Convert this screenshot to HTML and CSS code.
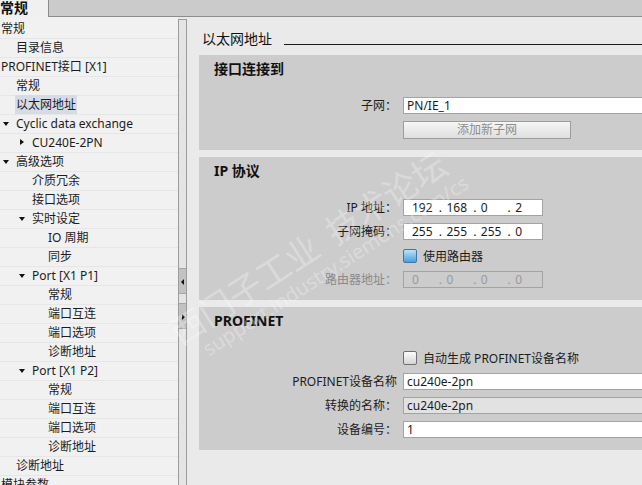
FILE: index.html
```html
<!DOCTYPE html>
<html lang="zh">
<head>
<meta charset="UTF-8">
<meta name="viewport" content="width=device-width, initial-scale=1.0">
<title>以太网地址</title>
<link rel="stylesheet" href="styles.css">
</head>
<body>
  <div class="tabbar">
    <div class="tab">常规</div>
  </div>
  <div class="main">
    <div class="tree">
      <div class="row l0">常规</div>
      <div class="row l1">目录信息</div>
      <div class="row l0">PROFINET接口 [X1]</div>
      <div class="row l1">常规</div>
      <div class="row l1"><span class="selected">以太网地址</span></div>
      <div class="row l1"><span class="arrow down"></span>Cyclic data exchange</div>
      <div class="row l2"><span class="arrow right"></span>CU240E-2PN</div>
      <div class="row l1"><span class="arrow down"></span>高级选项</div>
      <div class="row l2">介质冗余</div>
      <div class="row l2">接口选项</div>
      <div class="row l2"><span class="arrow down"></span>实时设定</div>
      <div class="row l3">IO 周期</div>
      <div class="row l3">同步</div>
      <div class="row l2"><span class="arrow down"></span>Port [X1 P1]</div>
      <div class="row l3">常规</div>
      <div class="row l3">端口互连</div>
      <div class="row l3">端口选项</div>
      <div class="row l3">诊断地址</div>
      <div class="row l2"><span class="arrow down"></span>Port [X1 P2]</div>
      <div class="row l3">常规</div>
      <div class="row l3">端口互连</div>
      <div class="row l3">端口选项</div>
      <div class="row l3">诊断地址</div>
      <div class="row l1">诊断地址</div>
      <div class="row l0">模块参数</div>
    </div>

    <div class="splitter">
      <div class="knob left"></div>
      <div class="knob right"></div>
    </div>

    <div class="content">
      <div class="page-title">
        <span>以太网地址</span>
        <span class="rule"></span>
      </div>

      <div class="section">
        <div class="section-title">接口连接到</div>
        <div class="form">
          <span class="label">子网：</span>
          <div class="input long">PN/IE_1</div>
          <span class="label"></span>
          <div class="button">添加新子网</div>
        </div>
      </div>

      <div class="section">
        <div class="section-title">IP 协议</div>
        <div class="form">
          <span class="label">IP 地址：</span>
          <div class="input ip"><span class="oct">192</span><span class="dot">.</span><span class="oct">168</span><span class="dot">.</span><span class="oct">0</span><span class="dot">.</span><span class="oct">2</span></div>
          <span class="label">子网掩码：</span>
          <div class="input ip"><span class="oct">255</span><span class="dot">.</span><span class="oct">255</span><span class="dot">.</span><span class="oct">255</span><span class="dot">.</span><span class="oct">0</span></div>
          <span class="label"></span>
          <div class="checkrow"><span class="check on"></span>使用路由器</div>
          <span class="label disabled">路由器地址：</span>
          <div class="input ip off"><span class="oct">0</span><span class="dot">.</span><span class="oct">0</span><span class="dot">.</span><span class="oct">0</span><span class="dot">.</span><span class="oct">0</span></div>
        </div>
      </div>

      <div class="section">
        <div class="section-title">PROFINET</div>
        <div class="form">
          <span class="label"></span>
          <div class="checkrow"><span class="check"></span>自动生成 PROFINET设备名称</div>
          <span class="label">PROFINET设备名称</span>
          <div class="input long">cu240e-2pn</div>
          <span class="label">转换的名称：</span>
          <div class="input long readonly">cu240e-2pn</div>
          <span class="label">设备编号：</span>
          <div class="input long">1</div>
        </div>
      </div>
    </div>
  </div>

  <!-- forum watermark over the screenshot -->
  <div class="watermark">
    <div class="wm-big">西门子工业&nbsp;&nbsp;技术论坛</div>
    <div class="wm-small">support.industry.siemens.com/cs</div>
  </div>
</body>
</html>
```

FILE: styles.css
```css
body {
  margin: 0;
  width: 642px;
  height: 485px;
  overflow: hidden;
  position: relative;
  font-family: "Noto Sans", "Noto Sans CJK SC", sans-serif;
  font-size: 12px;
  color: #1c1c1c;
  background-color: #eaeaea;
}

.tabbar {
  height: 16px;
  background-color: #cbcbcb;
  border-bottom: 1px solid #8c8c8c;
  display: flex;
  align-items: flex-start;
}
.tab {
  width: 48px;
  height: 17px;
  background-color: #f0f0f0;
  border-right: 1px solid #8c8c8c;
  font-weight: bold;
  font-size: 14px;
  line-height: 16px;
  color: #111;
}

.main {
  display: flex;
  height: 468px;
}

/* navigation tree */
.tree {
  width: 178px;
  flex: none;
  padding-top: 3px;
  background-color: #f1f1f1;
  overflow: hidden;
}
.row {
  height: 19px;
  line-height: 18px;
  box-sizing: border-box;
  border-bottom: 1px solid #e6e6e6;
  white-space: nowrap;
}
.row.l0 { padding-left: 1px; }
.row.l1 { padding-left: 16px; }
.row.l2 { padding-left: 32px; }
.row.l3 { padding-left: 48px; }
.selected {
  background-color: #d6dce6;
  padding: 1px 1px;
  margin-left: -1px;
}
.arrow {
  display: inline-block;
  width: 16px;
  height: 18px;
  margin-left: -16px;
  vertical-align: top;
  position: relative;
}
.arrow.down::before {
  content: "";
  position: absolute;
  left: 3px;
  top: 7px;
  border-left: 3.5px solid transparent;
  border-right: 3.5px solid transparent;
  border-top: 4px solid #111;
}
.arrow.right::before {
  content: "";
  position: absolute;
  left: 4px;
  top: 5px;
  border-top: 3.5px solid transparent;
  border-bottom: 3.5px solid transparent;
  border-left: 4px solid #111;
}

/* splitter between tree and editor */
.splitter {
  width: 7px;
  flex: none;
  margin-top: 2px;
  background-color: #e4e4e4;
  border: 1px solid #9c9c9c;
  border-bottom: none;
  display: flex;
  flex-direction: column;
}
.knob {
  height: 24px;
  background-color: #c2c2c2;
  border-top: 1px solid #a5a5a5;
  border-bottom: 1px solid #a5a5a5;
  position: relative;
}
.knob.left { margin-top: 248px; }
.knob.right { margin-top: 9px; }
.knob::before {
  content: "";
  position: absolute;
  top: 10px;
  border-top: 3px solid transparent;
  border-bottom: 3px solid transparent;
}
.knob.left::before { left: 2px; border-right: 3px solid #111; }
.knob.right::before { left: 3px; border-left: 3px solid #111; }

/* editor */
.content {
  flex: 1;
  padding-left: 12px;
  overflow: hidden;
  background-color: #eaeaea;
}
.page-title {
  display: flex;
  height: 20px;
  padding-top: 12px;
  margin-bottom: 6px;
  padding-left: 3px;
  font-size: 14px;
  line-height: 20px;
  color: #111;
  white-space: nowrap;
}
.rule {
  flex: 1;
  height: 0;
  margin-top: 15px;
  margin-left: 12px;
  border-top: 1px solid #1a1a1a;
}

.section {
  background-color: #cccccc;
  margin-bottom: 7px;
  padding-bottom: 12px;
}
.section-title {
  padding: 4px 0 0 15px;
  height: 20px;
  line-height: 20px;
  margin-bottom: 18px;
  font-size: 14px;
  font-weight: bold;
  color: #111;
}

.form {
  display: grid;
  grid-template-columns: 198px auto;
  grid-auto-rows: 17px;
  column-gap: 6px;
  row-gap: 7px;
}
.label {
  text-align: right;
  line-height: 17px;
  white-space: nowrap;
}
.label.disabled { color: #8a8a8a; }

.input {
  height: 17px;
  box-sizing: border-box;
  border: 1px solid #a3a3a3;
  background-color: #fff;
  padding-left: 3px;
  line-height: 15px;
  white-space: nowrap;
}
.input.long { width: 300px; }
.input.readonly { background-color: #e2e2e2; }
.input.ip {
  width: 140px;
  padding-left: 8px;
  display: flex;
}
.input.ip.off {
  background-color: transparent;
  color: #9a9a9a;
}
.oct { width: 28px; }
.dot { width: 8px; }

.button {
  width: 168px;
  height: 18px;
  box-sizing: border-box;
  border: 1px solid #9c9c9c;
  background: linear-gradient(#f6f6f6, #dedede);
  color: #8c8c8c;
  text-align: center;
  line-height: 16px;
}

.checkrow {
  display: flex;
  align-items: center;
  gap: 6px;
  white-space: nowrap;
}
.check {
  width: 14px;
  height: 14px;
  box-sizing: border-box;
  border: 1px solid #707070;
  border-radius: 2px;
  background: linear-gradient(#fdfdfd, #d4d4d4);
}
.check.on {
  border-color: #3f76a2;
  background: linear-gradient(#bfe4f8, #7fc2ec 50%, #4d9fd8);
}

.watermark {
  position: absolute;
  left: 162px;
  top: 318px;
  transform: rotate(-33deg);
  transform-origin: left top;
  color: rgba(255, 255, 255, 0.3);
  pointer-events: none;
  white-space: nowrap;
}
.wm-big {
  font-size: 34px;
  line-height: 40px;
  font-family: "Noto Sans CJK SC", sans-serif;
}
.wm-small {
  font-size: 20px;
  line-height: 22px;
  padding-left: 18px;
}
```
